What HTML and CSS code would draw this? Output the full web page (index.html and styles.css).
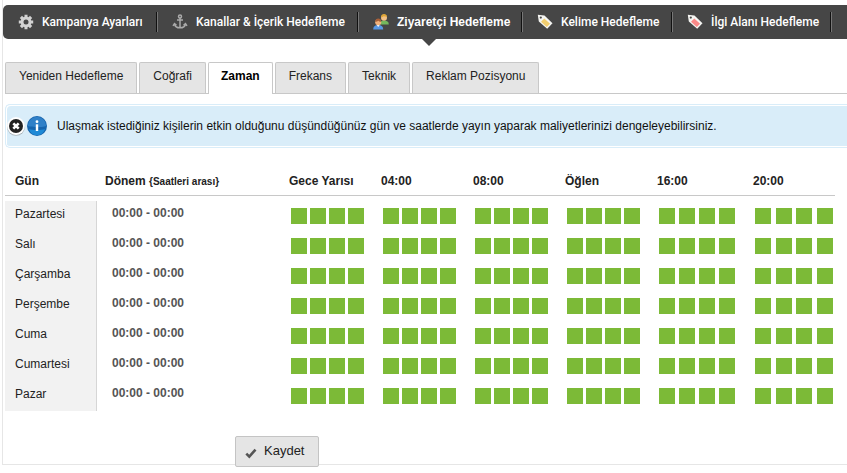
FILE: index.html
```html
<!DOCTYPE html>
<html lang="tr">
<head>
<meta charset="utf-8">
<meta name="viewport" content="width=device-width, initial-scale=1">
<title>Ziyaretçi Hedefleme</title>
<link rel="stylesheet" href="styles.css">
</head>
<body>
<div class="panel">
  <nav class="steps">
    <a class="step" href="#ayarlar">
      <svg class="icon" viewBox="0 0 16 16" aria-hidden="true"><path d="M6.5.8h3v2l1 .4L12 1.8 14.2 4l-1.4 1.5.4 1h2v3h-2l-.4 1 1.4 1.5-2.200 2.200-1.500-1.400-1 .4v2h-3v-2l-1-.4L4 14.200 1.800 12l1.400-1.500-.4-1h-2v-3h2l.4-1L1.800 4 4 1.800l1.500 1.400 1-.4z" fill="#d2d2d2"/><circle cx="8" cy="8" r="2.500" fill="#464646"/></svg>
      <span>Kampanya Ayarları</span>
    </a>
    <a class="step" href="#kanallar">
      <svg class="icon" viewBox="0 0 16 16" aria-hidden="true" fill="none" stroke="#aaa" stroke-width="1.500"><circle cx="8" cy="2.500" r="1.500"/><path d="M8 4v10M5 6h6M2.500 10c.5 2.500 2.500 3.800 5.500 3.800s5-1.300 5.500-3.800M1 11.800l1.500-2.200 2 1.700M15 11.800l-1.500-2.200-2 1.700"/></svg>
      <span>Kanallar &amp; İçerik Hedefleme</span>
    </a>
    <a class="step step-current" href="#ziyaretci" aria-current="page">
      <svg class="icon" viewBox="0 0 16 16" aria-hidden="true"><path d="M6.500 10.500c0-3 1.500-4 4.500-4s4.800 1 4.800 4z" fill="#74b85d"/><circle cx="11" cy="3.700" r="3" fill="#f3c185"/><path d="M7.900 3.500C8 1 9.300 0 11 0s3 .9 3.100 3c-1.500 0-2.400-.3-3.100-.9-.8.800-1.700 1.300-3.100 1.400z" fill="#dda536"/><path d="M.2 15.500c0-3 1.500-4.500 5-4.500s5 1.500 5 4.500z" fill="#5998e4"/><path d="M3.700 11l1.500 2 1.500-2z" fill="#fff"/><circle cx="5.200" cy="8.200" r="3" fill="#f2b27c"/><path d="M2.200 8C2.200 5.700 3.500 4.600 5.200 4.600S8.200 5.700 8.200 7.800c-1.600 0-2.500-.5-3-1-.7.700-1.600 1.200-3 1.200z" fill="#a96038"/></svg>
      <span>Ziyaretçi Hedefleme</span>
    </a>
    <a class="step" href="#kelime">
      <svg class="icon" viewBox="0 0 16 16" aria-hidden="true"><path d="M.8.800l6.700.8 8 7.600-5.300 5.600-8.400-7.300z" fill="#f5f5f2"/><path d="M7.300 4.400l5.800 5.300-3.300 3.300L4 7.700z" fill="#f1ce70"/><circle cx="3.800" cy="3.600" r="1.100" fill="#464646"/></svg>
      <span>Kelime Hedefleme</span>
    </a>
    <a class="step" href="#ilgi">
      <svg class="icon" viewBox="0 0 16 16" aria-hidden="true"><path d="M.8.800l6.700.8 8 7.600-5.300 5.600-8.400-7.300z" fill="#f5f5f2"/><path d="M7.300 4.400l5.800 5.300-3.300 3.300L4 7.700z" fill="#fa8988"/><circle cx="3.800" cy="3.600" r="1.100" fill="#464646"/></svg>
      <span>İlgi Alanı Hedefleme</span>
    </a>
  </nav>

  <div class="content">
    <nav class="tabs">
      <a class="tab" href="#yeniden">Yeniden Hedefleme</a>
      <a class="tab" href="#cografi">Coğrafi</a>
      <a class="tab tab-current" href="#zaman" aria-current="page">Zaman</a>
      <a class="tab" href="#frekans">Frekans</a>
      <a class="tab" href="#teknik">Teknik</a>
      <a class="tab" href="#pozisyon">Reklam Pozisyonu</a>
    </nav>

    <div class="notice">
      <button class="notice-close" type="button" aria-label="Kapat">
        <svg viewBox="0 0 20 20" aria-hidden="true"><circle cx="10" cy="10.800" r="9" fill="#a9b4ba"/><circle cx="10" cy="10" r="8.900" fill="#fff"/><circle cx="10" cy="10" r="7" fill="#222"/><path d="M7.300 7.300l5.400 5.400M12.700 7.300l-5.400 5.400" stroke="#fff" stroke-width="2.600"/></svg>
      </button>
      <svg class="notice-info" viewBox="0 0 20 20" aria-hidden="true"><circle cx="10" cy="10" r="10" fill="#1664ad"/><path d="M.8 10a9.200 9.200 0 0 1 18.400 0c-5 1.600-13 1.600-18.400 0z" fill="#2f80c8"/><path d="M2 13c4 1.500 12 1.500 16 0-1 3.500-4 6.200-8 6.200S3 16.500 2 13z" fill="#1f8ad6"/><circle cx="10" cy="5.700" r="1.400" fill="#fff"/><path d="M8.800 8.300h2.400v6.700H8.800z" fill="#fff"/></svg>
      <p class="notice-text">Ulaşmak istediğiniz kişilerin etkin olduğunu düşündüğünüz gün ve saatlerde yayın yaparak maliyetlerinizi dengeleyebilirsiniz.</p>
    </div>

    <form>
      <table class="schedule">
        <colgroup>
          <col class="col-hours"><col class="col-period"><col class="col-hours"><col class="col-hours"><col class="col-hours"><col class="col-hours"><col class="col-afternoon"><col class="col-evening">
        </colgroup>
        <thead>
          <tr>
            <th scope="col">Gün</th>
            <th scope="col">Dönem <small>{Saatleri arası}</small></th>
            <th scope="col">Gece Yarısı</th>
            <th scope="col">04:00</th>
            <th scope="col">08:00</th>
            <th scope="col">Öğlen</th>
            <th scope="col">16:00</th>
            <th scope="col">20:00</th>
          </tr>
        </thead>
        <tbody id="days"></tbody>
      </table>
      <button class="save" type="submit">
        <svg viewBox="0 0 12 12" aria-hidden="true"><path d="M1.300 6.700l3 3 6.200-7" fill="none" stroke="#555" stroke-width="2.600"/></svg>
        Kaydet
      </button>
    </form>
  </div>
</div>
<script src="script.js"></script>
</body>
</html>
```
FILE: styles.css
```css
* { box-sizing: border-box; }

body {
  margin: 0;
  background: #fff;
  color: #222;
  font: 12px/16px "Liberation Sans", Arial, sans-serif;
}

a { color: inherit; text-decoration: none; }

.panel {
  margin: 0 0 8px 2px;
  padding-top: 5px;
  border-left: 1px solid #e6e6e6;
  border-bottom: 1px solid #e6e6e6;
}

.steps {
  display: grid;
  grid-template-columns: 154px 201px 164px 150px 159px;
  height: 34px;
  align-items: center;
  background: #464646;
  border-radius: 5px 0 0 5px;
  color: #fff;
  font-family: Roboto, sans-serif;
  font-weight: 500;
  white-space: nowrap;
}

.step {
  position: relative;
  display: flex;
  align-items: center;
  gap: 8px;
  height: 20px;
  padding-left: 15px;
  border-right: 1px solid #111;
  box-shadow: 1px 0 #777;
}

.step-current {
  font-family: "Liberation Sans", Arial, sans-serif;
  font-weight: 700;
}

.step-current::after {
  content: "";
  position: absolute;
  top: 27px;
  left: 64px;
  border: 7px solid transparent;
  border-top-color: #464646;
  border-bottom: 0;
}

.icon { width: 16px; height: 16px; flex: none; }

.content { padding-left: 2px; }

.tabs {
  display: flex;
  gap: 2px;
  margin-top: 23px;
  border-bottom: 1px solid #c8c8c8;
  white-space: nowrap;
}

.tab {
  height: 31px;
  padding: 5px 13px;
  border: 1px solid #c8c8c8;
  border-bottom: 0;
  border-radius: 2px 2px 0 0;
  background: #e5e5e5;
}

.tab-current {
  height: 32px;
  margin-bottom: -1px;
  padding: 5px 12px;
  background: #fff;
  color: #000;
  font-weight: 700;
}

.notice {
  display: flex;
  align-items: center;
  height: 44px;
  margin-top: 10px;
  border: 1px solid #d9edf9;
  border-right: 0;
  border-radius: 5px 0 0 5px;
  background: #d9edf9;
  box-shadow: inset 1px 1px #fff, inset 0 -1px #fff;
  color: #111;
}

.notice-close {
  width: 20px;
  height: 20px;
  padding: 0;
  border: 0;
  background: none;
}

.notice-close svg { display: block; }

.notice-info { width: 20px; height: 20px; margin: 0 10px 0 1px; flex: none; }

.notice-text { margin: 0; }

.schedule {
  width: calc(100% - 12px);
  margin-top: 16px;
  border-collapse: separate;
  border-spacing: 0;
  table-layout: fixed;
}

.col-hours { width: 92px; }
.col-period { width: 184px; }
.col-afternoon { width: 96px; }
.col-evening { width: 90px; }

.schedule th { padding: 0; text-align: left; white-space: nowrap; }

.schedule thead th {
  height: 32px;
  padding: 2px 0 0 8px;
  border-bottom: 1px solid #c8c8c8;
}

.schedule thead th:first-child { padding-left: 10px; }

.schedule small { font-size: 10px; line-height: 12px; }

.schedule tbody::before { content: ""; display: block; height: 5px; }

.schedule tbody th,
.schedule tbody td { height: 30px; padding: 0; }

.schedule tbody th {
  padding: 0 0 4px 10px;
  border-right: 1px solid #d6d6d6;
  background: #f2f2f2;
  font-weight: 400;
}

.schedule tbody .period { padding: 0 0 6px 15px; color: #555; font-weight: 700; }

.hours { display: flex; gap: 3px; padding-left: 10px; }
.hours-afternoon { gap: 4px; }
.hours-evening { justify-content: space-between; padding-right: 2px; }

.hour {
  appearance: none;
  width: 16px;
  height: 16px;
  margin: 0;
  background: #fff;
  border: 1px solid #7cba37;
}

.hour:checked { background: #7cba37; }

.save {
  display: flex;
  align-items: center;
  gap: 7px;
  height: 31px;
  margin: 25px 0 -3px 230px;
  padding: 0 14px 1px 9px;
  border: 1px solid #c4c4c4;
  border-radius: 2px;
  background: #e5e5e5;
  color: #222;
  font: 13px/16px "Liberation Sans", Arial, sans-serif;
}

.save svg { width: 12px; height: 12px; margin-top: 4px; }
```
FILE: script.js
```js
const days = ["Pazartesi", "Salı", "Çarşamba", "Perşembe", "Cuma", "Cumartesi", "Pazar"];
const modifiers = ["", "", "", "", " hours-afternoon", " hours-evening"];

// One row per weekday, with six blocks of four hourly boxes.
document.getElementById("days").innerHTML = days.map(day => {
  const blocks = modifiers.map((modifier, block) => {
    const boxes = [0, 1, 2, 3].map(i => {
      const hour = String(block * 4 + i).padStart(2, "0");
      return `<input class="hour" type="checkbox" checked aria-label="${day} ${hour}:00">`;
    }).join("");
    return `<td><div class="hours${modifier}">${boxes}</div></td>`;
  }).join("");
  return `<tr><th scope="row">${day}</th><td class="period">00:00 - 00:00</td>${blocks}</tr>`;
}).join("");
```
